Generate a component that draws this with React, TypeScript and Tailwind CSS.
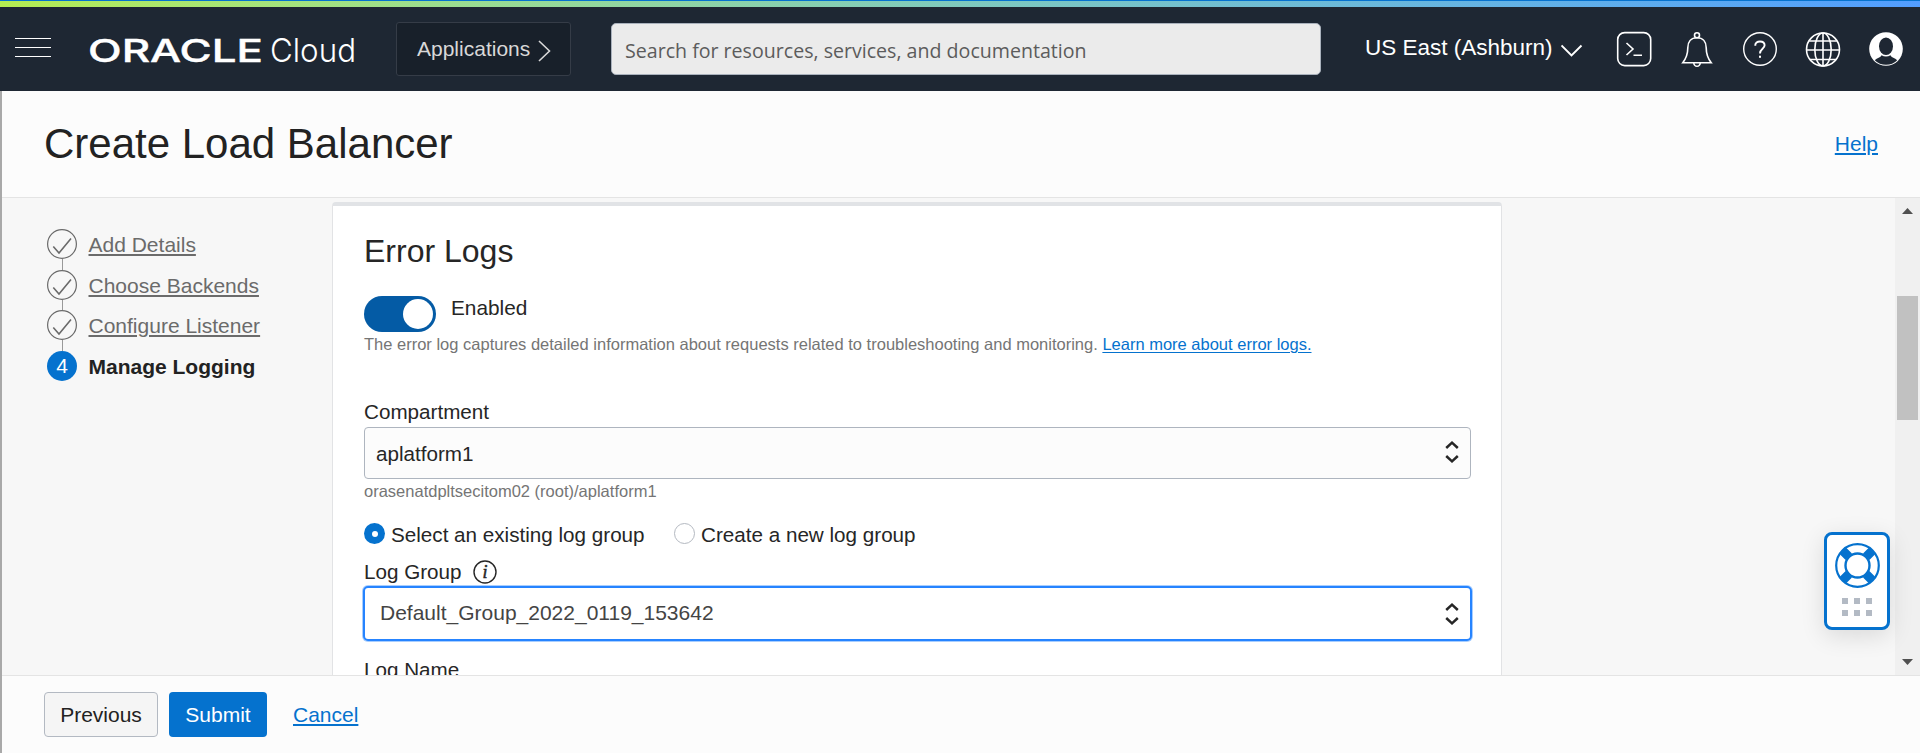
import React from "react";

const steps = ["Add Details", "Choose Backends", "Configure Listener"];

function SortArrows({ className = "" }: { className?: string }) {
  return (
    <svg className={`shrink-0 ${className}`} width="14" height="24" viewBox="0 0 14 24" fill="none" stroke="#262626" strokeWidth="2.5">
      <path d="M1.2 8 7 2.7l5.800 5.300" />
      <path d="M1.2 16 7 21.300l5.800-5.300" />
    </svg>
  );
}

function Logo() {
  return (
    <svg className="shrink-0" width="280" height="56" viewBox="0 0 280 56" fill="#fff" role="img">
      <text x="0" y="39.500" fontFamily="Inter, sans-serif" fontWeight="500" fontSize="31" textLength="175" lengthAdjust="spacingAndGlyphs" stroke="#fff" strokeWidth="0.400">
        ORACLE
      </text>
      <text x="182" y="39.500" fontFamily="Inter, sans-serif" fontWeight="300" fontSize="33" textLength="86" lengthAdjust="spacingAndGlyphs">
        Cloud
      </text>
    </svg>
  );
}

function TopBar() {
  return (
    <header className="shrink-0">
      <div className="h-px bg-[#0572ce]" />
      <div className="h-1.5 bg-linear-to-r from-[#b5ed50] to-[#529dff]" />
      <div className="flex h-[84px] bg-[#1e2733] pl-[15px] text-white">
        <div className="mt-[31px] flex w-9 shrink-0 flex-col gap-2">
          <div className="h-px bg-white" />
          <div className="h-px bg-white" />
          <div className="h-px bg-white" />
        </div>
        <div className="mt-[15px] flex w-[345px] shrink-0 pl-[37px]">
          <Logo />
        </div>
        <button className="mt-[15px] flex h-[54px] w-[175px] shrink-0 items-center rounded-[3px] border border-[#353c47] bg-[#18202a] pl-5 text-[21px] leading-6 text-[#d8d8d8]">
          <span className="w-[121px] text-left">Applications</span>
          <svg className="mt-1" width="14" height="22" viewBox="0 0 14 22" fill="none" stroke="#d8d8d8" strokeWidth="1.6">
            <path d="M1 1 11.500 11 1 21" />
          </svg>
        </button>
        <div className="mt-4 ml-10 flex h-[52px] w-[710px] shrink-0 items-center rounded-[5px] border border-[#a9b1bc] bg-[#ebebeb] pt-[3px] pl-[13px] font-['Open_Sans',sans-serif] text-[19.6px] leading-6 text-[#5c5c5c]">
          Search for resources, services, and documentation
        </div>
        <div className="mt-[29px] ml-11 flex h-6 w-[196px] shrink-0 items-center text-[22.5px] leading-6 whitespace-nowrap">US East (Ashburn)</div>
        <svg className="mt-[37px] shrink-0" width="22" height="14" viewBox="0 0 22 14" fill="none" stroke="#fff" strokeWidth="1.9">
          <path d="M0.500 1.500 10.500 11.500 20.500 1.500" />
        </svg>
        <div className="mt-6 ml-[33px] flex gap-[27px]">
          <svg width="36" height="37" viewBox="0 0 36 37" fill="none" stroke="#fff" strokeWidth="1.600">
            <rect x="1.700" y="1.600" width="33" height="33" rx="7" />
            <path d="M10.500 12l6.500 6-6.500 6M17.500 24.200h8.500" />
          </svg>
          <svg width="36" height="37" viewBox="0 0 36 37" fill="none" stroke="#fff" strokeWidth="1.600">
            <circle cx="18" cy="4.200" r="2.500" />
            <path d="M18 6.800c-6 0-9.200 4-9.200 10 0 7-1.500 10.500-5 14.900h28.400c-3.500-4.400-5-7.900-5-14.900 0-6-3.200-10-9.200-10z" />
            <path d="M14.800 31.700a3.200 3.600 0 0 0 6.400 0" />
          </svg>
          <svg width="36" height="37" viewBox="0 0 36 37" fill="none" stroke="#fff" strokeWidth="1.400">
            <circle cx="18" cy="18" r="16.300" />
            <path d="M13.300 14.800v-.8c0-2.200 1.800-3.500 4.700-3.500s4.600 1.300 4.600 3.800c0 3.700-4.600 3.200-4.600 8.200" strokeWidth="1.900" />
            <rect x="17" y="24.700" width="2" height="2.100" fill="#fff" stroke="none" />
          </svg>
          <svg width="36" height="37" viewBox="0 0 36 37" fill="none" stroke="#fff" strokeWidth="1.600">
            <circle cx="18" cy="18.500" r="16.500" />
            <ellipse cx="18" cy="18.500" rx="8.200" ry="16.500" />
            <path d="M18 2v33M1.500 19h33M4.200 10h27.600M4.500 28.500h27" />
          </svg>
          <svg width="36" height="37" viewBox="0 0 36 37">
            <circle cx="18" cy="18" r="16.800" fill="#fff" />
            <ellipse cx="18" cy="15.300" rx="7" ry="8.800" fill="#1e2733" />
            <path d="M13.500 24.200c2.800 1.700 6.200 1.700 9 0 .8 2.600 4.500 2.700 6.700 5a15.800 15.800 0 0 1-22.400 0c2.200-2.300 5.900-2.400 6.700-5z" fill="#1e2733" />
          </svg>
        </div>
      </div>
    </header>
  );
}

function Stepper() {
  return (
    <nav className="flex w-[330px] shrink-0 flex-col pt-[31px] pl-[45px] text-[21px] leading-6">
      {steps.map((label) => (
        <div key={label} className="flex h-[40.7px]">
          <div className="flex w-[30px] shrink-0 flex-col items-center">
            <svg className="shrink-0" width="30" height="30" viewBox="0 0 30 30" fill="none" stroke="#6a6a6a">
              <circle cx="15" cy="15" r="14.400" strokeWidth="1.200" />
              <path d="M6.300 17.500l5.700 6.500L24 9.500" strokeWidth="1.600" />
            </svg>
            <div className="w-px flex-1 bg-[#999]" />
          </div>
          <a className="ml-[11.5px] pt-1 text-[#6b6b6b] underline decoration-2 underline-offset-2">{label}</a>
        </div>
      ))}
      <div className="flex">
        <div className="flex size-[30px] items-center justify-center rounded-full bg-[#0572ce] text-[21px] text-white">4</div>
        <span className="ml-[11.5px] pt-1 font-bold text-[#222]">Manage Logging</span>
      </div>
    </nav>
  );
}

function ErrorLogs() {
  return (
    <section className="mt-1 flex w-[1170px] shrink-0 flex-col rounded-t-[4px] border-x border-t-4 border-x-[#e2e3e5] border-t-[#e1e3e6] bg-white pl-[31px] text-[20.65px] leading-6 text-[#262626]">
      <h2 className="mt-[25px] shrink-0 text-[32px] leading-10">Error Logs</h2>
      <div className="mt-[25px] flex h-9 shrink-0">
        <div className="flex h-9 w-[72px] items-center justify-end rounded-full bg-[#045ba5] pr-[3px]">
          <div className="size-[30px] rounded-full bg-white" />
        </div>
        <span className="ml-[15px] text-[20.8px]">Enabled</span>
      </div>
      <p className="mt-0.5 shrink-0 text-[16.5px] leading-5 text-[#757575]">
        The error log captures detailed information about requests related to troubleshooting and monitoring.{" "}
        <a className="text-[#0572ce] underline underline-offset-2">Learn more about error logs.</a>
      </p>
      <label className="mt-[46px] shrink-0">Compartment</label>
      <div className="mt-[3px] flex h-[52px] w-[1107px] shrink-0 items-center justify-between rounded-[4px] border border-[#aeb5bf] bg-[#fcfcfc] pr-[11px] pl-[11px]">
        <span className="pt-0.5">aplatform1</span>
        <SortArrows className="-mt-[3px]" />
      </div>
      <p className="mt-0.5 shrink-0 text-[16.5px] leading-5 text-[#757575]">orasenatdpltsecitom02 (root)/aplatform1</p>
      <div className="mt-[22px] flex h-6 shrink-0">
        <div className="flex size-[21px] items-center justify-center rounded-full bg-[#0572ce]">
          <div className="size-1.5 rounded-full bg-white" />
        </div>
        <span className="ml-1.5 w-[283px]">Select an existing log group</span>
        <div className="size-[21px] rounded-full border border-[#b4b9c1] bg-white" />
        <span className="ml-1.5">Create a new log group</span>
      </div>
      <div className="mt-[13px] flex h-6 shrink-0">
        <span>Log Group</span>
        <svg className="ml-[11px]" width="24" height="24" viewBox="0 0 24 24" fill="none" stroke="#262626">
          <circle cx="12" cy="12" r="11" strokeWidth="1.400" />
          <text x="12" y="17.500" textAnchor="middle" fontFamily="Liberation Serif, serif" fontStyle="italic" fontWeight="400" fontSize="18" fill="#262626" strokeWidth="0.500">
            i
          </text>
        </svg>
      </div>
      <div className="mt-0.5 -ml-px flex h-[55px] w-[1109px] shrink-0 items-center justify-between rounded-[5px] border-2 border-[#2684ff] bg-white pr-[11px] pl-[15px] text-[21px] text-[#444] ring-1 ring-[#2684ff]/40">
        <span className="-mt-0.5">Default_Group_2022_0119_153642</span>
        <SortArrows />
      </div>
      <label className="mt-[17px] shrink-0">Log Name</label>
    </section>
  );
}

function ScrollBar() {
  return (
    <div className="ml-auto flex w-[25px] shrink-0 flex-col items-center bg-[#f0f0f0]">
      <svg className="mt-2.5 shrink-0" width="11" height="6" viewBox="0 0 11 6" fill="#505050">
        <path d="M0 6 5.500 0 11 6z" />
      </svg>
      <div className="mt-[82px] h-[124px] w-[21px] shrink-0 bg-[#c1c1c1]" />
      <div className="flex-1" />
      <svg className="mb-2.5 shrink-0" width="11" height="6" viewBox="0 0 11 6" fill="#505050">
        <path d="M0 0 5.500 6 11 0z" />
      </svg>
    </div>
  );
}

function SupportWidget() {
  return (
    <div className="absolute top-[532px] left-[1824px] flex h-[98px] w-[66px] flex-col items-center rounded-[8px] border-3 border-[#0572ce] bg-white pt-2 shadow-[0_6px_24px_rgba(0,0,0,0.12)]">
      <svg width="45" height="45" viewBox="0 0 45 45" fill="none" stroke="#0572ce">
        <circle cx="22.500" cy="22.500" r="21.300" strokeWidth="2.200" />
        <circle cx="22.500" cy="22.500" r="12" strokeWidth="2.400" />
        <path d="M7.800 7.800l6 6M37.200 7.800l-6 6M7.800 37.200l6-6M37.200 37.200l-6-6" strokeWidth="9" />
      </svg>
      <div className="mt-2.5 grid grid-cols-3 gap-1.5">
        {[0, 1, 2, 3, 4, 5].map((n) => (
          <div key={n} className="size-1.5 bg-[#b3bac4]" />
        ))}
      </div>
    </div>
  );
}

export default function App() {
  return (
    <div className="relative flex h-[753px] w-[1920px] flex-col overflow-hidden bg-[#fcfcfc] font-['Liberation_Sans',Arial,sans-serif]">
      <TopBar />
      <div className="flex min-h-0 flex-1 flex-col border-l-2 border-[#a9a9a9]">
        <div className="flex h-[107px] shrink-0 items-center justify-between border-b border-[#e4e4e4] pr-[42px] pl-[42px]">
          <h1 className="text-[42px] leading-12 text-[#222]">Create Load Balancer</h1>
          <a className="text-[21px] leading-6 text-[#0572ce] underline decoration-2 underline-offset-2">Help</a>
        </div>
        <main className="flex h-[477px] shrink-0 overflow-hidden bg-[#f7f7f7]">
          <Stepper />
          <ErrorLogs />
          <ScrollBar />
        </main>
        <footer className="flex flex-1 items-start border-t border-[#e4e4e4] pt-4 pl-[42px] text-[21px] leading-6">
          <button className="flex h-[45px] w-[114px] items-center justify-center rounded-[4px] border border-[#b3b9c2] bg-[#f5f5f5] text-[#222]">Previous</button>
          <button className="ml-[11px] flex h-[45px] w-[98px] items-center justify-center rounded-[4px] bg-[#0572ce] text-white">Submit</button>
          <a className="mt-[11px] ml-[26px] text-[#0572ce] underline decoration-2 underline-offset-2">Cancel</a>
        </footer>
      </div>
      <SupportWidget />
    </div>
  );
}
